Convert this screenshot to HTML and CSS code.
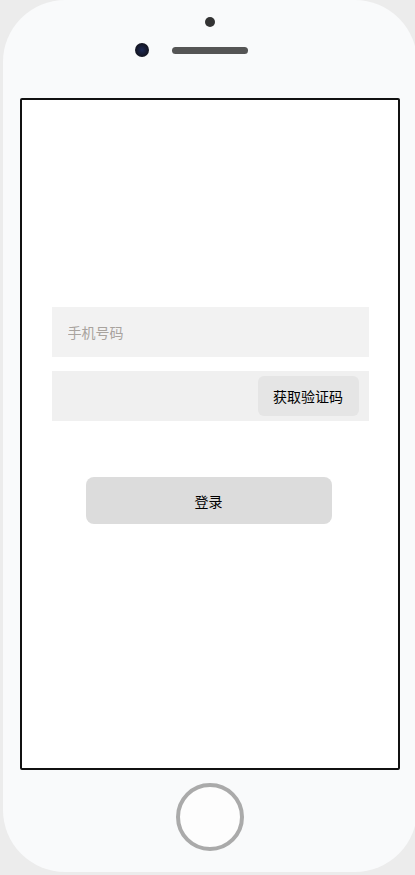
FILE: index.html
```html
<!DOCTYPE html>
<html lang="zh-CN">
<head>
<meta charset="utf-8">
<title>登录</title>
<link rel="stylesheet" href="styles.css">
</head>
<body>
<div class="phone">
  <div class="phone-top">
    <div class="sensor"></div>
    <div class="top-row">
      <div class="camera"></div>
      <div class="speaker"></div>
    </div>
  </div>
  <div class="screen">
    <form class="form">
      <input class="field" type="text" placeholder="手机号码">
      <div class="field code-field">
        <input class="code-input" type="text">
        <button type="button" class="code-btn">获取验证码</button>
      </div>
      <button type="button" class="login-btn">登录</button>
    </form>
  </div>
  <div class="phone-bottom">
    <div class="home"></div>
  </div>
</div>
</body>
</html>
```
FILE: styles.css
```css
* { box-sizing: border-box; }
html, body {
  margin: 0;
  padding: 0;
  background: #ececec;
  overflow: hidden;
  height: 875px;
  font-family: "Noto Sans CJK SC", "Noto Sans", sans-serif;
}
.phone {
  margin-left: 3px;
  width: 414px;
  height: 872px;
  border-radius: 62px;
  background: #f9fafb;
  display: flex;
  flex-direction: column;
}
.phone-top {
  height: 98px;
  padding-top: 17px;
  display: flex;
  flex-direction: column;
  align-items: center;
}
.sensor {
  width: 10px;
  height: 10px;
  border-radius: 50%;
  background: #333;
}
.top-row {
  margin-top: 16px;
  width: 100%;
  display: grid;
  grid-template-columns: 1fr auto 1fr;
  align-items: center;
}
.camera {
  justify-self: end;
  margin-right: 23px;
  width: 14px;
  height: 14px;
  border-radius: 50%;
  background: radial-gradient(circle, #1e2a55 0%, #15182a 55%, #111 100%);
}
.speaker {
  width: 76px;
  height: 7px;
  border-radius: 4px;
  background: #555;
}
.screen {
  margin-left: 17px;
  width: 380px;
  height: 672px;
  border: 2px solid #111;
  border-radius: 2px;
  background: #fff;
  padding-top: 207px;
}
.form {
  width: 317px;
  margin: 0 auto;
  display: flex;
  flex-direction: column;
  gap: 14px;
}
.field {
  height: 50px;
  border: none;
  outline: none;
  background: #f2f2f2;
  padding: 0 16px;
  font-family: inherit;
  font-size: 14px;
  color: #333;
}
.field::placeholder { color: #a8a39e; }
.code-field {
  background: #f0f0f0;
  display: flex;
  align-items: center;
  padding: 0 10px 0 16px;
}
.code-input {
  flex: 1;
  min-width: 0;
  border: none;
  outline: none;
  background: transparent;
  font-family: inherit;
  font-size: 14px;
}
.code-btn {
  width: 101px;
  height: 40px;
  border: none;
  border-radius: 6px;
  background: #e5e5e5;
  color: #000;
  font-family: inherit;
  font-size: 14px;
  padding: 0;
}
.login-btn {
  margin: 42px 0 0 34px;
  width: 246px;
  height: 47px;
  border: none;
  border-radius: 8px;
  background: #dcdcdc;
  color: #000;
  font-family: inherit;
  font-size: 14px;
}
.phone-bottom {
  display: flex;
  justify-content: center;
  padding-top: 13px;
}
.home {
  width: 68px;
  height: 68px;
  border-radius: 50%;
  border: 4px solid #aaa;
  background: #fdfdfd;
}
```
